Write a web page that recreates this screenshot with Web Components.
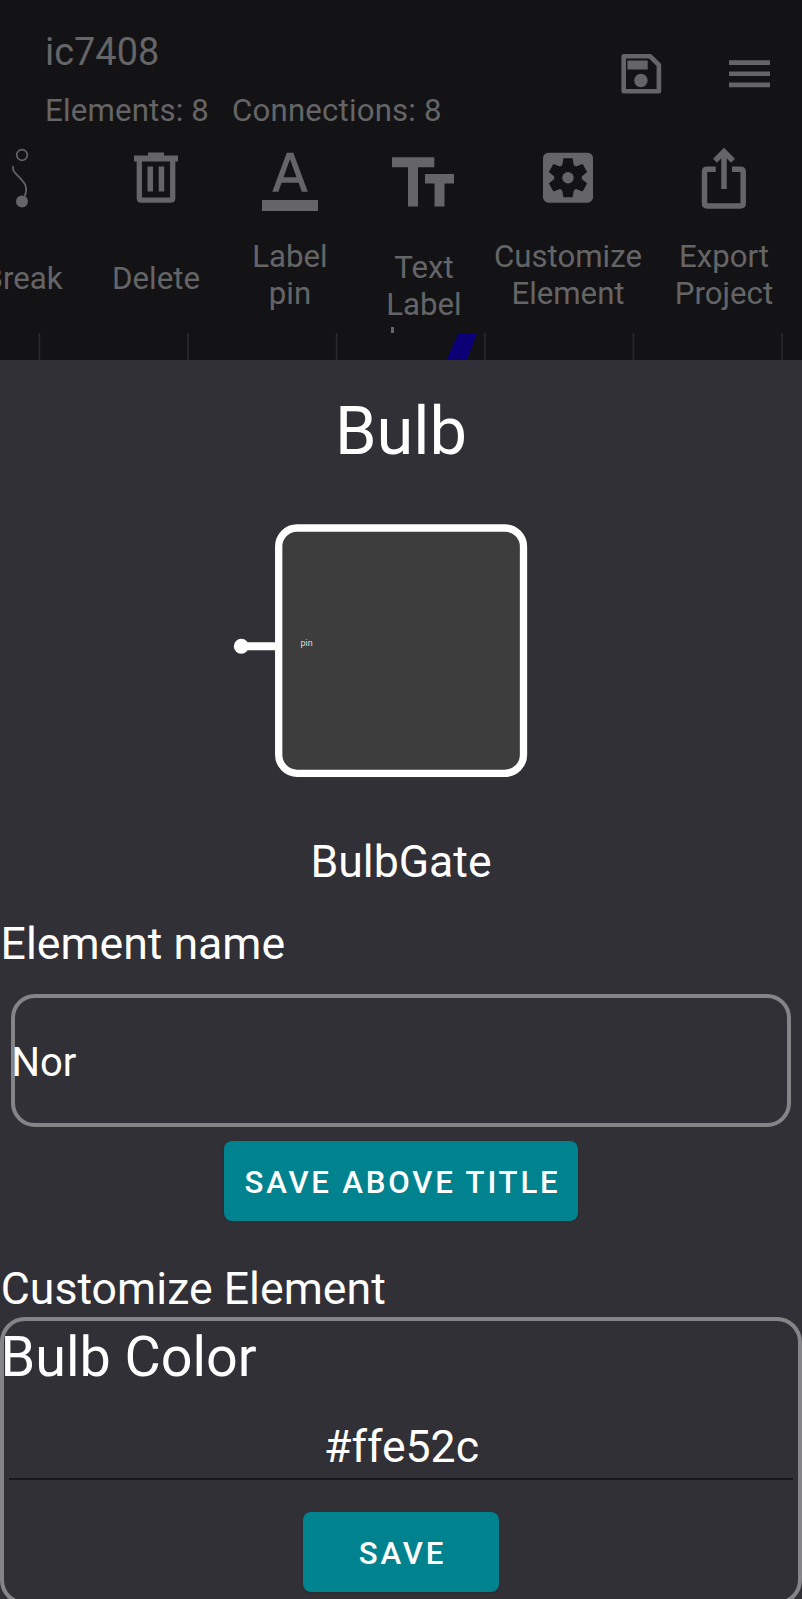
<!DOCTYPE html>
<html lang="en">
<head>
<meta charset="utf-8">
<title>Circuit editor</title>
<style>
html,body{margin:0;padding:0;background:#313036}
body{width:802px;height:1599px;overflow:hidden;font-family:Roboto,sans-serif;color:#fff}
</style>
</head>
<body>
<circuit-app></circuit-app>
<script>
const define=(name,html)=>{
  const t=document.createElement('template');t.innerHTML=html;
  customElements.define(name,class extends HTMLElement{
    constructor(){super();this.attachShadow({mode:'open'}).append(t.content.cloneNode(true));}
  });
};

define('app-header',`<style>
:host{display:flex;justify-content:space-between;height:147px;box-sizing:border-box;color:#656567}
.info{padding:30px 0 0 45px}
.title{font-size:37.900px;line-height:45px}
.stats{display:flex;gap:23px;margin-top:17px;font-size:31.2px;line-height:37px;letter-spacing:.18px;white-space:nowrap}
.actions{display:flex;gap:52.500px;padding:47px 26.500px 0 0}
svg{display:block;width:54px;height:54px}
</style>
<div class="info"><div class="title">ic7408</div><div class="stats"><span>Elements: 8</span><span>Connections: 8</span></div></div>
<div class="actions">
<svg viewBox="0 0 54 54"><path fill="none" stroke="#656567" stroke-width="4.6" stroke-linejoin="round" d="M8.700 9.300h26.500l8.700 8.700v26.200h-35.200z"/><path fill="#656567" d="M12.400 13.500h20.300v9h-20.300z"/><circle cx="25.900" cy="33.500" r="6.700" fill="#656567"/></svg>
<svg viewBox="0 0 54 54"><path fill="#656567" d="M7 13.200h41v4.700h-41zM7 24.400h41v4.700h-41zM7 35.600h41v4.700h-41z"/></svg>
</div>`);

define('tool-item',`<style>
:host{display:flex;flex-direction:column;align-items:center;color:#656567;text-align:center}
.icon{height:64px;width:66px}
.label{box-sizing:border-box;height:122px;padding-top:8px;display:flex;flex-direction:column;align-items:center;justify-content:center;font-size:31.2px;line-height:36.6px}
::slotted(svg){display:block}
</style>
<div class="icon"><slot name="icon"></slot></div><div class="label"><slot></slot></div>`);

define('tool-bar',`<style>
:host{display:grid;grid-template-columns:134px 134px 134px 134px 154px 158px;margin-left:-45px;height:186px;overflow:hidden}
.g{fill:#656567}.l{fill:none;stroke:#656567}.k{fill:#131315}
svg{width:66px;height:64px}
.one{padding-top:6px}
.first{padding-left:2px}
.low{padding-top:21px}
.cut{position:relative}
.cut i{position:absolute;left:5px;bottom:-10px;width:3px;height:6.500px;background:#656567}
span{display:block;white-space:pre-line}
</style>
<tool-item><svg slot="icon" viewBox="0 0 66 64"><circle class="l" cx="33" cy="8" r="5.300" stroke-width="1.700"/><path class="l" stroke-width="1.700" d="M24.300 19c-1.200 3 .2 5.300 2.500 7.600l5.500 5.700c4.500 4.800 6.400 9 3.500 17"/><circle class="g" cx="33" cy="54.500" r="6"/></svg><span class="one first">Break</span></tool-item>
<tool-item><svg slot="icon" viewBox="0 0 66 64"><path class="g" d="M25 5.500h16v3h14v6h-44v-6h14z"/><path class="l" stroke-width="5.300" d="M16.300 11v40q0 2.200 2.200 2.200h29q2.200 0 2.200-2.200v-40"/><path class="g" d="M24.500 19.500h5.500v25h-5.500zM35.700 19.500h5.500v25h-5.500z"/></svg><span class="one">Delete</span></tool-item>
<tool-item><svg slot="icon" viewBox="0 0 66 64"><path class="g" fill-rule="evenodd" d="M15.300 44.800l14.500-39h6.500l14.500 39h-6l-3.200-9h-17l-3.200 9zM26.500 30.300h13l-6.500-18z"/><path class="g" d="M5 53h56v11h-56z"/></svg><span>Label
pin</span></tool-item>
<tool-item><svg slot="icon" viewBox="0 0 66 64"><path class="g" d="M1 10.300h42.300v10h-16.300v39.300h-10v-39.300h-16zM34 27h29v9.500h-9.500v23.100h-10v-23.100h-9.500z"/></svg><span class="cut low">Text
Label<i></i></span></tool-item>
<tool-item><svg slot="icon" viewBox="0 0 66 64"><rect class="g" x="8" y="5.700" width="50" height="50" rx="5.500"/><g class="k" transform="translate(33 30.800)"><circle r="13.800"/><path d="M-4.600-19.500h9.200l1.200 7v25l-1.200 7h-9.200l-1.200-7v-25z"/><path transform="rotate(60)" d="M-4.600-19.500h9.200l1.200 7v25l-1.200 7h-9.200l-1.200-7v-25z"/><path transform="rotate(-60)" d="M-4.600-19.500h9.200l1.200 7v25l-1.200 7h-9.200l-1.200-7v-25z"/></g><circle class="g" cx="33" cy="30.800" r="5.700"/></svg><span>Customize
Element</span></tool-item>
<tool-item><svg slot="icon" viewBox="0 0 66 64"><path class="l" stroke-width="5.500" d="M24.700 22.300h-8.500q-2.700 0-2.700 2.700v31.300q0 2.700 2.700 2.700h33.300q2.700 0 2.700-2.700v-31.300q0-2.700-2.700-2.700h-8.500M33 42v-36"/><path class="l" stroke-width="5.500" d="M24 13.700l9-9 9 9"/></svg><span>Export
Project</span></tool-item>`);

define('canvas-strip',`<style>:host{display:block;height:27px;overflow:hidden}svg{display:block}</style>
<svg width="802" height="27" viewBox="0 0 802 27"><path stroke="#29292c" stroke-width="1.700" d="M39.300 0v27M188 0v27M336.700 0v27M485 0v27M633.400 0v27M782 0v27"/><path fill="#0c0078" d="M458.500 0h19l-11 27h-20z"/><path stroke="#0a0058" stroke-width="1" d="M466 5l-9.500 22"/></svg>`);

define('bulb-preview',`<style>:host{display:block;height:300px}svg{display:block}text{font:9px Roboto,sans-serif;fill:#ddd;letter-spacing:0}</style>
<svg width="802" height="300" viewBox="0 0 802 300"><rect x="278.700" y="28" width="244.800" height="245.300" rx="18.500" fill="#3d3d3d" stroke="#fff" stroke-width="7.300"/><path stroke="#fff" stroke-width="8" d="M241 146.300h36"/><circle cx="241.300" cy="146.300" r="7.500" fill="#fff"/><text x="300.400" y="146.300">pin</text></svg>`);

define('action-button',`<style>:host{display:block}
button{all:unset;display:block;box-sizing:border-box;width:100%;height:80px;border-radius:8px;background:#00838f;color:#fff;text-align:center;font-weight:500;font-size:31.200px;line-height:83px;letter-spacing:2.820px;text-indent:3px;white-space:nowrap;box-shadow:0 1px 2px #0003}
</style><button><slot></slot></button>`);

define('name-field',`<style>:host{display:flex;align-items:center;box-sizing:border-box;height:133px;border:4px solid #858486;border-radius:24px;padding-top:4px;font-size:40px;line-height:47px;letter-spacing:0}
span{margin-left:-3.500px}</style><span><slot></slot></span>`);

define('color-card',`<style>:host{display:block;box-sizing:border-box;height:288px;border:4px solid #858486;border-radius:25px;padding-top:4px;letter-spacing:0}
.t{font-size:55.700px;line-height:65px;margin-left:-3.500px}
.v{font-size:44.600px;line-height:52px;text-align:center;text-indent:1px;margin:31px 5px 0;padding-bottom:5px;border-bottom:2px solid #17161b}
.b{width:196px;margin:32px auto 0}</style>
<div class="t">Bulb Color</div><div class="v">#ffe52c</div><div class="b"><action-button>SAVE</action-button></div>`);

define('element-sheet',`<style>:host{display:block;height:1239px;overflow:hidden;background:#313036;font-size:44.600px;line-height:52px;letter-spacing:0}
h1{margin:0;padding-top:32px;font-weight:400;font-size:66.800px;line-height:78px;text-align:center}
bulb-preview{margin-top:30px}
.gate{margin-top:36px;text-align:center}
.name{margin-top:30px;padding-left:.600px}
name-field{margin:24px 11px 0}
.save{width:354px;margin:14px auto 0 224px}
.cust{margin-top:42px;padding-left:.700px;letter-spacing:.04px}
color-card{margin-top:2px}
</style>
<h1>Bulb</h1><bulb-preview></bulb-preview><div class="gate">BulbGate</div><div class="name">Element name</div><name-field>Nor</name-field><div class="save"><action-button>SAVE ABOVE TITLE</action-button></div><div class="cust">Customize Element</div><color-card></color-card>`);

define('circuit-app',`<style>:host{display:block;height:1599px;overflow:hidden;background:#131315}</style>
<app-header></app-header><tool-bar></tool-bar><canvas-strip></canvas-strip><element-sheet></element-sheet>`);
</script>
</body>
</html>
